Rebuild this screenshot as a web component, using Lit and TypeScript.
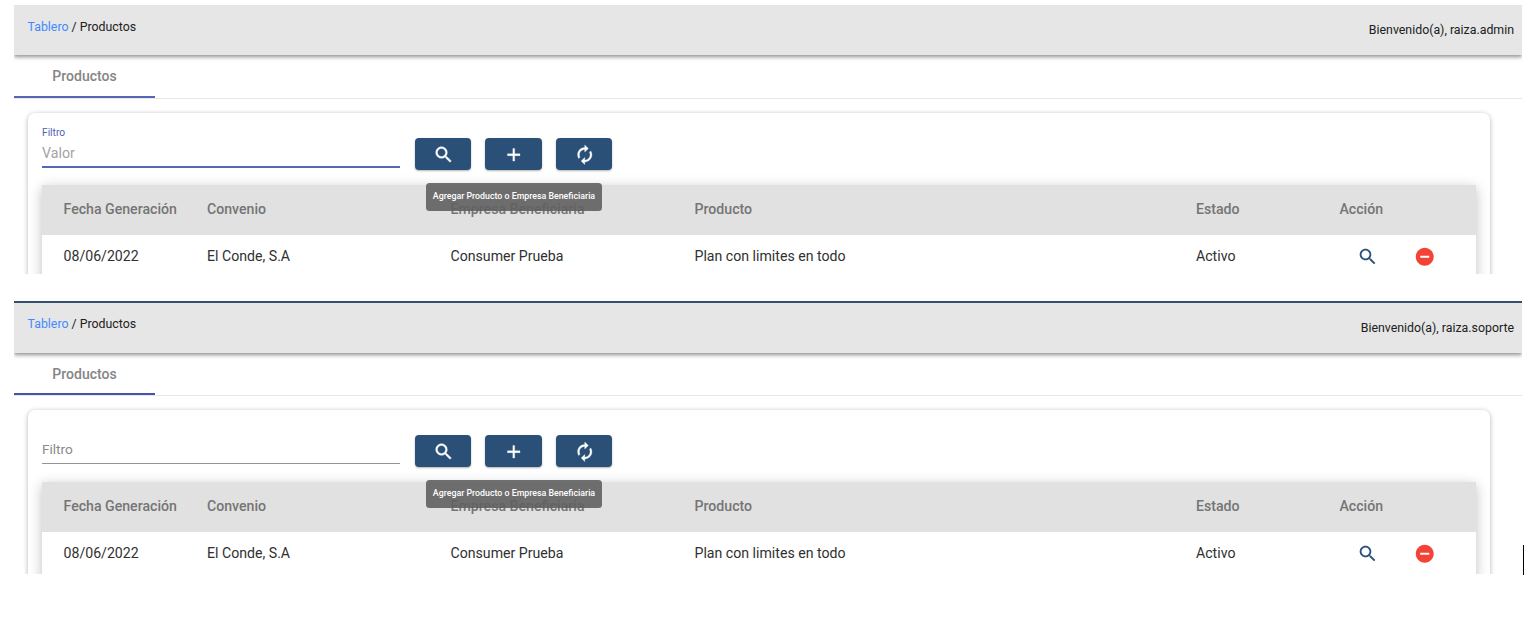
import { LitElement, html, css, svg } from "lit";
import { customElement, property } from "lit/decorators.js";
import { classMap } from "lit/directives/class-map.js";

const ICONS = {
  search: svg`<path d="M15.5 14h-.79l-.28-.27C15.41 12.59 16 11.11 16 9.5 16 5.91 13.09 3 9.5 3S3 5.91 3 9.5 5.91 16 9.5 16c1.61 0 3.09-.59 4.23-1.57l.27.28v.79l5 4.99L20.49 19l-4.99-5zm-6 0C7.01 14 5 11.99 5 9.5S7.01 5 9.5 5 14 7.01 14 9.5 11.99 14 9.5 14z"/>`,
  add: svg`<path d="M19 13h-6v6h-2v-6H5v-2h6V5h2v6h6v2z"/>`,
  autorenew: svg`<path d="M12 6v3l4-4-4-4v3c-4.42 0-8 3.58-8 8 0 1.57.46 3.03 1.24 4.26L6.7 14.8c-.45-.83-.7-1.79-.7-2.8 0-3.31 2.69-6 6-6zm6.76 1.74L17.3 9.2c.44.84.7 1.79.7 2.8 0 3.31-2.69 6-6 6v-3l-4 4 4 4v-3c4.42 0 8-3.58 8-8 0-1.57-.46-3.03-1.24-4.26z"/>`,
  remove: svg`<path d="M12 2C6.48 2 2 6.48 2 12s4.48 10 10 10 10-4.48 10-10S17.52 2 12 2zm5 11H7v-2h10v2z"/>`,
};

@customElement("mat-glyph")
class MatGlyph extends LitElement {
  @property() name: keyof typeof ICONS = "search";
  static styles = css`
    :host { display: block; width: 21.5px; height: 21.5px; }
    .glyph { display: block; width: 100%; height: 100%; fill: currentColor; }
  `;
  render() {
    return html`<svg class="glyph" viewBox="0 0 24 24">${ICONS[this.name]}</svg>`;
  }
}

@customElement("product-panel")
class ProductPanel extends LitElement {
  @property() user = "";
  @property({ type: Boolean }) focused = false;

  static styles = css`
    * { box-sizing: border-box; }
    :host { display: block; width: 1508px; overflow: hidden; background: #fff; }
    .top {
      display: flex; justify-content: space-between; height: 50px;
      padding: 14px 8px 0 13.5px; background: #e6e6e6; color: #212121;
      font-size: 12.35px; line-height: 16px; position: relative;
      box-shadow: 0 2px 4px rgba(0, 0, 0, 0.44);
    }
    .top.plain { padding-top: 13px; }
    .link { color: #448aff; }
    .user { padding-top: 3px; }
    .plain .user { padding-top: 4px; }
    .tabs { display: flex; height: 44px; border-bottom: 1px solid #e6e6e6; }
    .tab {
      width: 141px; height: 43px; padding-top: 12px; text-align: center;
      font-size: 14px; font-weight: 500; line-height: 19px; color: #858585;
      border-bottom: 2px solid #5765b6;
    }
    .tabs.plain { height: 43px; }
    .tabs.plain .tab { height: 42px; padding-top: 11.5px; border-color: #4553ab; }
    .card {
      width: 1462px; height: 210px; margin: 14px 0 0 14px; padding: 0 14px;
      border-radius: 7px; box-shadow: 0 1px 5px rgba(0, 0, 0, 0.3);
    }
    .tools { display: flex; height: 72px; }
    .field {
      display: flex; flex-direction: column; width: 358.4px; height: 55px;
      padding-top: 13px; border-bottom: 2px solid #5765b6; margin-right: 14.6px;
    }
    .label { font-size: 10.2px; line-height: 13px; color: #4f5eb3; }
    .value { padding-top: 5px; font-size: 14.2px; line-height: 18px; color: #a3a3a3; }
    .field.idle { height: 54px; padding-top: 30px; border-bottom: 1px solid #949494; }
    .idle .value { padding-top: 0; font-size: 13.6px; color: #8a8a8a; }
    .buttons { display: flex; gap: 14px; padding-top: 25px; }
    .slot { position: relative; }
    .btn {
      display: flex; align-items: center; justify-content: center;
      width: 56.5px; height: 32px; padding: 1px 0 0 0.6px;
      border-radius: 4px; background: #2a5078; color: #fff;
      box-shadow: 0 1px 2px rgba(0, 0, 0, 0.3);
    }
    .btn mat-glyph { stroke: #fff; stroke-width: 0.35; }
    .tip {
      position: absolute; top: 45px; left: -59.5px; z-index: 2; width: 176px; height: 28px;
      border-radius: 3.5px; background: rgba(97, 97, 97, 0.9); color: #fff;
      font-size: 8.8px; font-weight: 500; line-height: 27px; text-align: center; white-space: nowrap;
    }
    .table { box-shadow: 0 3px 12px rgba(0, 0, 0, 0.25); height: 150px; background: #fff; }
    .row {
      display: grid; grid-template-columns: 143.5px 243.5px 244px 501.5px 143.5px 1fr;
      padding-left: 21.5px; align-items: center; height: 43px;
      font-size: 14.13px; color: #303030;
    }
    .row > span { padding-bottom: 1px; }
    .head { height: 50px; background: #e1e1e1; font-weight: 500; color: #757575; }
    .head > span { padding-bottom: 3px; }
    .row > .actions { display: flex; gap: 35px; padding: 1px 0 0 17.8px; }
    .view { color: #2a5078; }
    .del { color: #f44336; }
  `;

  render() {
    const plain = !this.focused;
    return html`
      <div class=${classMap({ top: true, plain })}>
        <div><span class="link">Tablero</span> / Productos</div>
        <div class="user">Bienvenido(a), ${this.user}</div>
      </div>
      <div class=${classMap({ tabs: true, plain })}><div class="tab">Productos</div></div>
      <div class="card">
        <div class="tools">
          <div class=${classMap({ field: true, idle: plain })}>
            ${this.focused ? html`<div class="label">Filtro</div>` : ""}
            <div class="value">${this.focused ? "Valor" : "Filtro"}</div>
          </div>
          <div class="buttons">
            <div class="slot"><div class="btn"><mat-glyph name="search"></mat-glyph></div></div>
            <div class="slot">
              <div class="btn"><mat-glyph name="add"></mat-glyph></div>
              <div class="tip">Agregar Producto o Empresa Beneficiaria</div>
            </div>
            <div class="slot"><div class="btn"><mat-glyph name="autorenew"></mat-glyph></div></div>
          </div>
        </div>
        <div class="table">
          <div class="row head">
            <span>Fecha Generación</span><span>Convenio</span><span>Empresa Beneficiaria</span>
            <span>Producto</span><span>Estado</span><span>Acción</span>
          </div>
          <div class="row">
            <span>08/06/2022</span><span>El Conde, S.A</span><span>Consumer Prueba</span>
            <span>Plan con limites en todo</span><span>Activo</span>
            <span class="actions">
              <mat-glyph class="view" name="search"></mat-glyph>
              <mat-glyph class="del" name="remove"></mat-glyph>
            </span>
          </div>
        </div>
      </div>
    `;
  }
}

@customElement("app-root")
class AppRoot extends LitElement {
  static styles = css`
    :host {
      display: block; box-sizing: border-box; width: 1527px; height: 626px; padding: 5px 0 0 14px;
      overflow: hidden; background: #fff; font-family: Roboto, sans-serif;
    }
    .first { height: 269px; }
    .bottom { display: flex; align-items: flex-end; margin-top: 27px; }
    .second { height: 271px; border-top: 2px solid #34506b; }
    .caret { width: 1px; height: 30px; background: #000; margin: 0 0 -1px 1px; }
  `;
  render() {
    return html`
      <product-panel class="first" user="raiza.admin" focused></product-panel>
      <div class="bottom">
        <product-panel class="second" user="raiza.soporte"></product-panel>
        <div class="caret"></div>
      </div>
    `;
  }
}
